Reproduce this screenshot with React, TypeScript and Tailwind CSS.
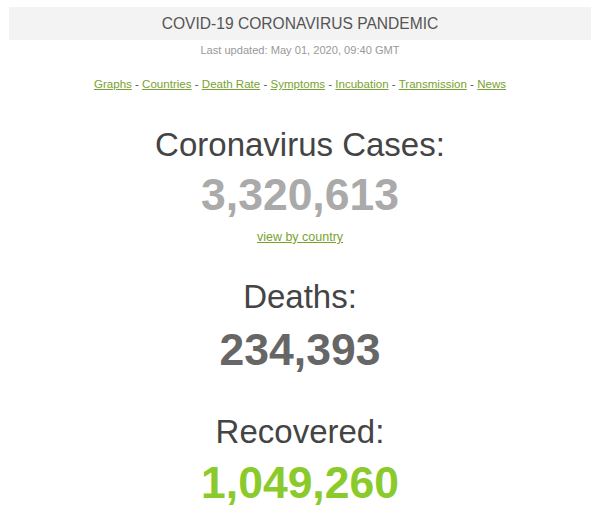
const links = ["Graphs", "Countries", "Death Rate", "Symptoms", "Incubation", "Transmission", "News"];

function Counter({ label, value, color, top, gap }: { label: string; value: string; color: string; top: string; gap: string }) {
  return (
    <div className={`flex flex-col items-center ${top}`}>
      <h1 className="text-[33px] leading-[38px] text-[#444]">{label}</h1>
      <div className={`${gap} text-[44.5px] leading-[50px] font-bold ${color}`}>{value}</div>
    </div>
  );
}

export default function App() {
  return (
    <div className="w-[600px] h-[517px] bg-white overflow-hidden font-['Liberation_Sans',Arial,sans-serif] text-center">
      <div className="mx-[9px] mt-[7px] h-[33px] bg-[#f3f3f3] flex items-center justify-center">
        <span className="text-[15.6px] text-[#555]">COVID-19 CORONAVIRUS PANDEMIC</span>
      </div>
      <div className="mt-[3px] text-[11.1px] leading-[14px] text-[#999]">Last updated: May 01, 2020, 09:40 GMT</div>

      <div className="mt-[19px] text-[11.55px] leading-[16px] text-[#555]">
        {links.map((l, i) => (
          <span key={l}>
            {i > 0 && " - "}
            <a href="#" className="text-[#79a22f] underline">{l}</a>
          </span>
        ))}
      </div>

      <Counter label="Coronavirus Cases:" value="3,320,613" color="text-[#aaa]" top="mt-[34px]" gap="mt-[6px]" />
      <div className="mt-[9px] text-[12.5px] leading-[16px]">
        <a href="#" className="text-[#79a22f] underline">view by country</a>
      </div>

      <Counter label="Deaths:" value="234,393" color="text-[#666]" top="mt-[33px]" gap="mt-[9px]" />
      <Counter label="Recovered:" value="1,049,260" color="text-[#8aca2b]" top="mt-[38px]" gap="mt-[7px]" />
    </div>
  );
}
